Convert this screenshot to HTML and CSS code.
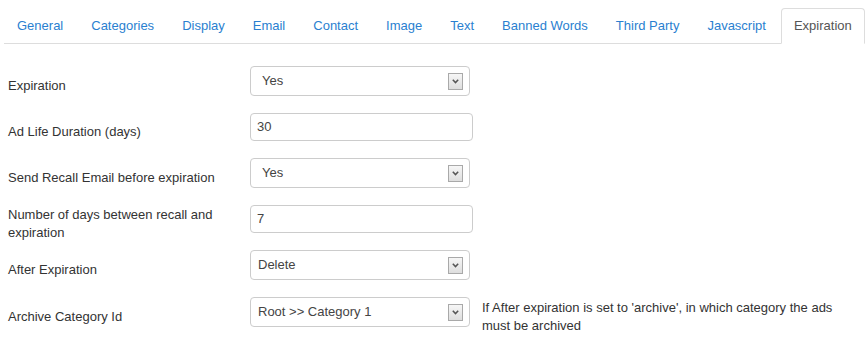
FILE: index.html
```html
<!DOCTYPE html>
<html>
<head>
<meta charset="utf-8">
<link rel="stylesheet" href="styles.css">
</head>
<body>
<div class="page">
  <ul class="tabs">
    <li><a>General</a></li>
    <li><a>Categories</a></li>
    <li><a>Display</a></li>
    <li><a>Email</a></li>
    <li><a>Contact</a></li>
    <li><a>Image</a></li>
    <li><a>Text</a></li>
    <li><a>Banned Words</a></li>
    <li><a>Third Party</a></li>
    <li><a>Javascript</a></li>
    <li class="active"><a>Expiration</a></li>
  </ul>
  <div class="form">
    <div class="row">
      <div class="label">Expiration</div>
      <div class="cell"><div class="select"><span class="val yes">Yes</span><span class="arrow"><svg width="7" height="5" viewBox="0 0 7 5"><path d="M0.8 0.8 L3.5 3.6 L6.2 0.8" fill="none" stroke="#555" stroke-width="1.5"/></svg></span></div></div>
      <div class="help"></div>
    </div>
    <div class="row">
      <div class="label">Ad Life Duration (days)</div>
      <div class="cell"><div class="input">30</div></div>
      <div class="help"></div>
    </div>
    <div class="row">
      <div class="label">Send Recall Email before expiration</div>
      <div class="cell"><div class="select"><span class="val yes">Yes</span><span class="arrow"><svg width="7" height="5" viewBox="0 0 7 5"><path d="M0.8 0.8 L3.5 3.6 L6.2 0.8" fill="none" stroke="#555" stroke-width="1.5"/></svg></span></div></div>
      <div class="help"></div>
    </div>
    <div class="row">
      <div class="label">Number of days between recall and expiration</div>
      <div class="cell"><div class="input">7</div></div>
      <div class="help"></div>
    </div>
    <div class="row">
      <div class="label">After Expiration</div>
      <div class="cell"><div class="select"><span class="val">Delete</span><span class="arrow"><svg width="7" height="5" viewBox="0 0 7 5"><path d="M0.8 0.8 L3.5 3.6 L6.2 0.8" fill="none" stroke="#555" stroke-width="1.5"/></svg></span></div></div>
      <div class="help"></div>
    </div>
    <div class="row">
      <div class="label">Archive Category Id</div>
      <div class="cell"><div class="select"><span class="val">Root &gt;&gt; Category 1</span><span class="arrow"><svg width="7" height="5" viewBox="0 0 7 5"><path d="M0.8 0.8 L3.5 3.6 L6.2 0.8" fill="none" stroke="#555" stroke-width="1.5"/></svg></span></div></div>
      <div class="help">If After expiration is set to 'archive', in which category the ads must be archived</div>
    </div>
  </div>
</div>
</body>
</html>
```
FILE: styles.css
```css
body {
  margin: 0;
  background: #fff;
  font-family: "Liberation Sans", Arial, sans-serif;
  font-size: 13px;
  line-height: 18px;
  color: #333;
}
.page {
  padding: 8px 4px 0 4px;
}
.tabs {
  display: flex;
  list-style: none;
  margin: 0;
  padding: 0;
  border-bottom: 1px solid #ddd;
}
.tabs li {
  margin-bottom: -1px;
  flex-shrink: 0;
  white-space: nowrap;
}
.tabs a {
  display: block;
  padding: 8px 12px;
  line-height: 18px;
  margin-right: 2px;
  border: 1px solid transparent;
  border-radius: 4px 4px 0 0;
  color: #2a7fd0;
}
.tabs li.active a {
  color: #555;
  background: #fff;
  border-color: #ddd #ddd transparent #ddd;
}
.form {
  margin-top: 18px;
}
.row {
  display: grid;
  grid-template-columns: 246px 232px 1fr;
  align-items: center;
  padding: 4px 0 3px 0;
}
.label {
  padding-left: 4px;
  padding-right: 24px;
}
.cell {
  padding-bottom: 10px;
}
.select {
  box-sizing: border-box;
  width: 220px;
  height: 30px;
  border: 1px solid #ccc;
  border-radius: 4px;
  display: flex;
  align-items: center;
  justify-content: space-between;
  padding: 0 6px 0 7px;
  color: #444;
}
.val.yes {
  padding-left: 4px;
}
.arrow {
  box-sizing: border-box;
  width: 15px;
  height: 17px;
  border: 1px solid #a9a9a9;
  background: linear-gradient(#f6f6f6, #dedede);
  display: flex;
  align-items: center;
  justify-content: center;
}
.arrow svg {
  display: block;
}
.input {
  box-sizing: border-box;
  width: 223px;
  height: 28px;
  border: 1px solid #ccc;
  border-radius: 4px;
  padding: 4px 6px;
  color: #444;
}
.help {
  padding-right: 20px;
}
```
